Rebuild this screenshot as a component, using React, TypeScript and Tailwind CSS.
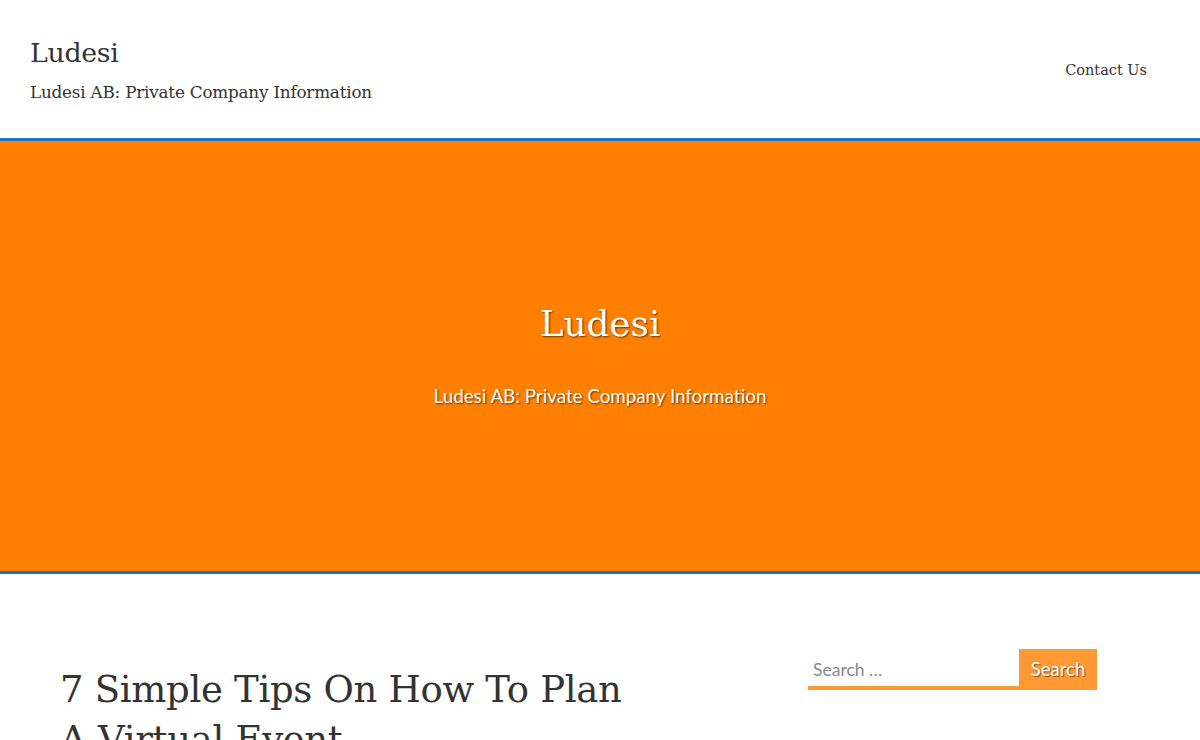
import React from "react";

const slab = "font-['DejaVu_Serif',serif]";
const sans = "font-['Lato','Open_Sans',sans-serif]";

export default function App() {
  return (
    <div className="w-[1200px] h-[740px] overflow-hidden bg-white">
      {/* Header */}
      <header className="h-[138px] flex justify-between items-start px-[30px] pt-[36px]">
        <div>
          <h1 className={`${slab} text-[26.8px] leading-[34px] text-[#333] tracking-[-0.3px]`}>Ludesi</h1>
          <p className={`${slab} text-[16.8px] leading-[20px] mt-[12px] text-[#333] tracking-[-0.2px]`}>
            Ludesi AB: Private Company Information
          </p>
        </div>
        <nav className="pt-[21px] pr-[23px]">
          <a className={`${slab} text-[14.5px] text-[#333]`}>Contact Us</a>
        </nav>
      </header>

      {/* Hero */}
      <section className="h-[436px] bg-[#ff8000] border-y-[3px] border-[#1e73be] flex flex-col items-center pt-[161px]">
        <h2 className={`${slab} text-[35.8px] leading-[44px] text-white [text-shadow:1px_1px_2px_rgba(0,0,0,0.6)]`}>
          Ludesi
        </h2>
        <p className={`${sans} text-[18.8px] leading-[24px] mt-[38px] text-white [text-shadow:1px_1px_2px_rgba(0,0,0,0.6)]`}>
          Ludesi AB: Private Company Information
        </p>
      </section>

      {/* Content */}
      <main className="flex px-[60px] pt-[75px]">
        <article className="w-[590px] pt-[16px]">
          <h2 className={`${slab} text-[37px] leading-[50px] text-[#333] tracking-[-0.3px]`}>
            7 Simple Tips On How To Plan A Virtual Event
          </h2>
        </article>
        <aside className="ml-[158px]">
          <form className="flex">
            <div className="w-[211px] h-[41px] border-b-4 border-[#ff9933] flex items-center pl-[5px] pt-[5px]">
              <span className={`${sans} text-[17.5px] text-[#888]`}>Search …</span>
            </div>
            <button
              type="button"
              className={`${sans} w-[78px] h-[41px] bg-[#ff9933] text-white text-[18.5px] [text-shadow:1px_1px_1px_rgba(0,0,0,0.5)]`}
            >
              Search
            </button>
          </form>
        </aside>
      </main>
    </div>
  );
}
